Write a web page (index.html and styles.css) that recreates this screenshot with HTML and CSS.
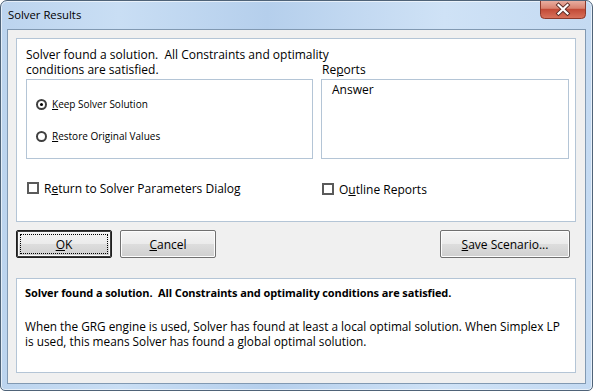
FILE: index.html
```html
<!DOCTYPE html>
<html>
<head>
<meta charset="utf-8">
<link rel="stylesheet" href="styles.css">
</head>
<body>
<div class="window">
  <div class="titlebar">
    <span class="title">Solver Results</span>
    <div class="close">
      <svg width="46" height="19" viewBox="0 0 46 19">
        <defs>
          <linearGradient id="cg" x1="0" y1="0" x2="0" y2="1">
            <stop offset="0" stop-color="#eab3a6"/>
            <stop offset="0.45" stop-color="#d9826f"/>
            <stop offset="0.5" stop-color="#c24a36"/>
            <stop offset="1" stop-color="#d9735d"/>
          </linearGradient>
        </defs>
        <path d="M0.5 0 V14.5 Q0.5 18.5 4.5 18.5 H41.5 Q45.5 18.5 45.5 14.5 V0" fill="url(#cg)" stroke="#8c3a2c"/>
        <path d="M18.5 5 L27.5 13.5 M27.5 5 L18.5 13.5" stroke="#5a2a24" stroke-width="4" stroke-linecap="square"/>
        <path d="M18.5 5 L27.5 13.5 M27.5 5 L18.5 13.5" stroke="#ffffff" stroke-width="2.2" stroke-linecap="square"/>
      </svg>
    </div>
  </div>
  <div class="client">
    <div class="panel top-panel">
      <div class="grid">
        <p class="msg"><span class="line">Solver found a solution.&nbsp; All Constraints and optimality</span> <span class="line">conditions are satisfied.</span></p>
        <div class="reports-label">Re<u>p</u>orts</div>
        <div class="groupbox">
          <div class="radio-row"><span class="radio checked"></span><span class="rlabel"><u>K</u>eep Solver Solution</span></div>
          <div class="radio-row"><span class="radio"></span><span class="rlabel"><u>R</u>estore Original Values</span></div>
        </div>
        <div class="listbox"><div class="item">Answer</div></div>
      </div>
      <div class="checks">
        <div class="check-row c1"><span class="checkbox"></span><span>R<u>e</u>turn to Solver Parameters Dialog</span></div>
        <div class="check-row c2"><span class="checkbox"></span><span>O<u>u</u>tline Reports</span></div>
      </div>
    </div>
    <div class="buttons">
      <div class="btn default"><span class="focus"><u>O</u>K</span></div>
      <div class="btn"><span><u>C</u>ancel</span></div>
      <div class="btn save"><span><u>S</u>ave Scenario...</span></div>
    </div>
    <div class="panel bottom-panel">
      <p class="bold">Solver found a solution.&nbsp; All Constraints and optimality conditions are satisfied.</p>
      <p class="desc">When the GRG engine is used, Solver has found at least a local optimal solution. When Simplex LP is used, this means Solver has found a global optimal solution.</p>
    </div>
  </div>
</div>
</body>
</html>
```

FILE: styles.css
```css
html, body {
  margin: 0;
  padding: 0;
  background: #ffffff;
}
body {
  font-family: "Open Sans", "Noto Sans", sans-serif;
  font-size: 12px;
  color: #000;
}
p { margin: 0; }
u { text-decoration: underline; text-underline-offset: 1px; }

.window {
  width: 593px;
  height: 391px;
  box-sizing: border-box;
  border: 1px solid #4f6378;
  border-radius: 7px 7px 5px 5px;
  background: linear-gradient(to right, #bcd4ee 0%, #c9def4 20%, #b5cfec 45%, #cfe2f6 75%, #c4daf2 100%);
  padding: 0 6px 6px 6px;
  display: flex;
  flex-direction: column;
  overflow: hidden;
  box-shadow: inset 0 0 0 1px rgba(255,255,255,0.6);
}

.titlebar {
  height: 28px;
  display: flex;
  align-items: flex-start;
  justify-content: space-between;
  flex-shrink: 0;
}
.title {
  padding-top: 6px;
  padding-left: 1px;
  line-height: 15px;
  font-size: 11.3px;
  color: #000;
}
.close {
  height: 19px;
  margin-top: -1px;
}
.close svg { display: block; }

.client {
  flex: 1;
  background: #f0f0f0;
  border: 1px solid #8199b2;
  padding: 8px 10px 10px 8px;
  display: flex;
  flex-direction: column;
}

.panel {
  background: #ffffff;
  border: 1px solid #b4c5d6;
  box-sizing: border-box;
  width: 560px;
}

.top-panel {
  height: 184px;
  padding: 8px 0 0 9px;
}

.grid {
  display: grid;
  grid-template-columns: 287px 248px;
  column-gap: 8px;
  grid-template-rows: 30px 80px;
  row-gap: 2px;
}
.msg {
  line-height: 15px;
}
.msg .line {
  display: block;
  width: fit-content;
  white-space: nowrap;
}
.reports-label {
  align-self: end;
  line-height: 13px;
  margin-left: 1px;
  margin-bottom: 1px;
}
.groupbox, .listbox {
  border: 1px solid #b4c5d6;
  box-sizing: border-box;
  height: 80px;
}
.groupbox {
  padding: 19px 0 0 9px;
  display: flex;
  flex-direction: column;
  gap: 21px;
}
.radio-row {
  display: flex;
  align-items: center;
  gap: 5px;
  height: 11px;
}
.radio {
  width: 11px;
  height: 11px;
  box-sizing: border-box;
  border: 2px solid #404040;
  border-radius: 50%;
  background: #fff;
  display: flex;
  align-items: center;
  justify-content: center;
}
.radio.checked::after {
  content: "";
  width: 3px;
  height: 3px;
  border-radius: 50%;
  background: #000;
}
.rlabel {
  font-size: 10px;
  line-height: 11px;
}
.listbox {
  padding: 2px 0 0 10px;
}
.item { line-height: 15px; }

.checks {
  display: flex;
  margin-top: 23px;
}
.check-row {
  display: flex;
  align-items: center;
  gap: 5px;
  height: 12px;
  line-height: 15px;
}
.c1 { margin-left: 1px; width: 295px; }
.c2 { margin-top: 1px; }
.checkbox {
  width: 12px;
  height: 12px;
  box-sizing: border-box;
  border: 2px solid #5a5a5a;
  background: #fff;
}

.buttons {
  display: flex;
  gap: 8px;
  margin-top: 8px;
  width: 560px;
}
.btn {
  width: 96px;
  height: 28px;
  box-sizing: border-box;
  border: 1px solid #707070;
  border-radius: 2px;
  background: linear-gradient(#f4f4f4 0%, #ebebeb 50%, #dddddd 51%, #cfcfcf 100%);
  box-shadow: inset 0 0 0 1px #fcfcfc;
  display: flex;
  align-items: center;
  justify-content: center;
  line-height: 15px;
  padding-top: 1px;
}
.btn.default {
  border: 1px solid #1e1e1e;
  box-shadow: inset 0 0 0 1px #3c3c3c, inset 0 0 0 2px #f8f8f8;
  padding: 3px;
}
.btn.default .focus {
  flex: 1;
  align-self: stretch;
  border: 1px dotted #000;
  display: flex;
  align-items: center;
  justify-content: center;
}
.btn.save {
  width: 130px;
  margin-left: auto;
  margin-right: 6px;
}

.bottom-panel {
  margin-top: 20px;
  height: 95px;
  padding: 6px 12px 0 8px;
}
.bold {
  font-weight: bold;
  font-size: 11px;
  letter-spacing: -0.1px;
  line-height: 15px;
}
.desc {
  margin-top: 19px;
  line-height: 15px;
  font-size: 11.8px;
}
```
